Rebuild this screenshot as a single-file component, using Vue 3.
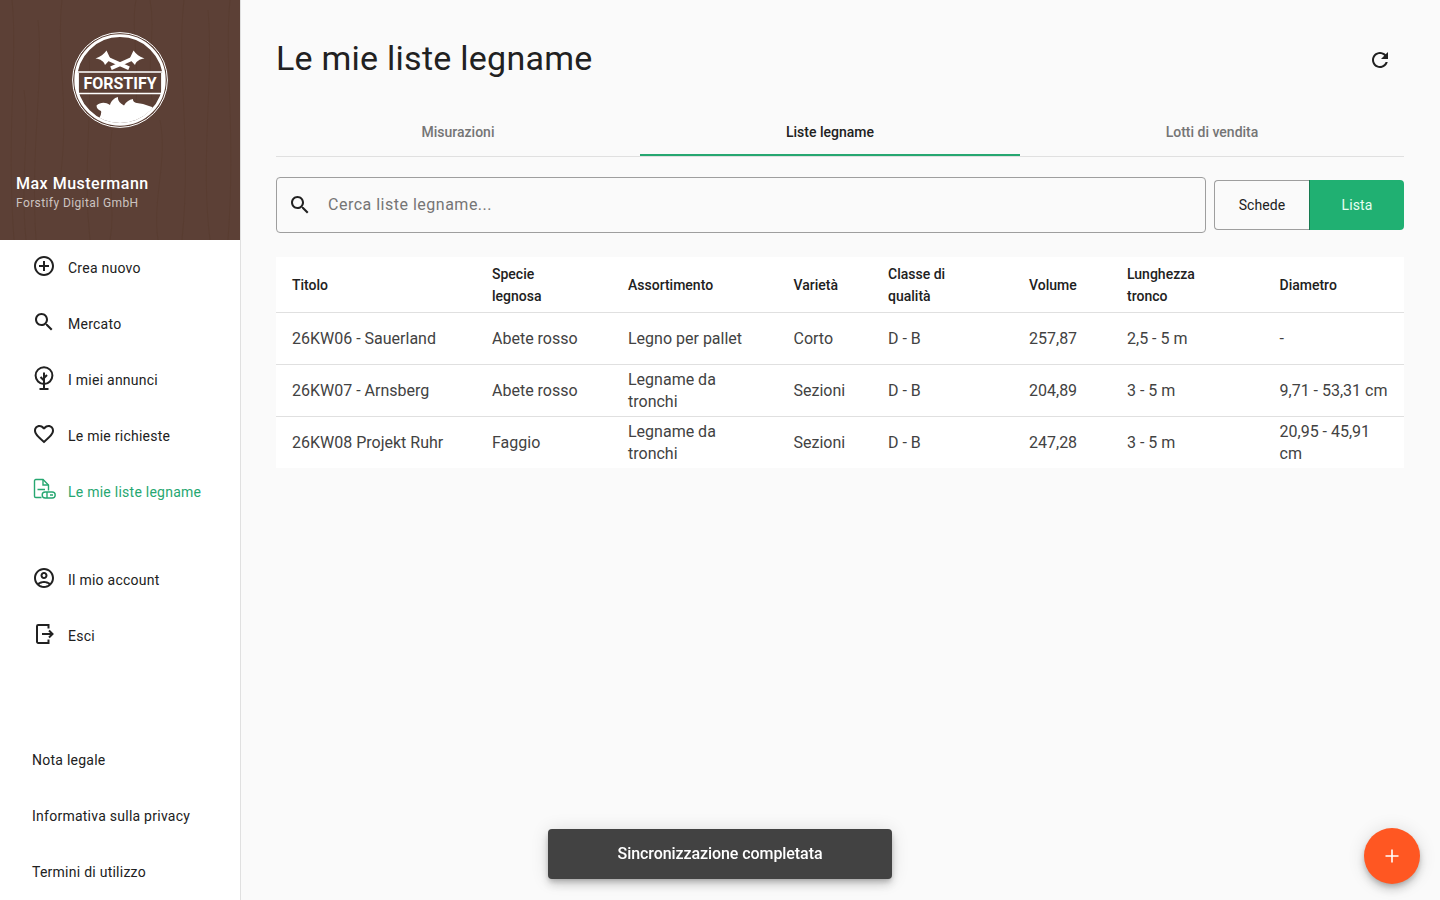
<script setup>
const mainNav = [
  { label: 'Crea nuovo', icon: 'add' },
  { label: 'Mercato', icon: 'search' },
  { label: 'I miei annunci', icon: 'tree' },
  { label: 'Le mie richieste', icon: 'heart' },
  { label: 'Le mie liste legname', icon: 'list', active: true }
]
const accountNav = [
  { label: 'Il mio account', icon: 'account' },
  { label: 'Esci', icon: 'exit' }
]
const legal = ['Nota legale', 'Informativa sulla privacy', 'Termini di utilizzo']
const tabs = [
  { label: 'Misurazioni', cls: 'tab-a' },
  { label: 'Liste legname', cls: 'tab-b', active: true },
  { label: 'Lotti di vendita', cls: 'tab-c' }
]
const headers = ['Titolo', 'Specie legnosa', 'Assortimento', 'Varietà', 'Classe di qualità', 'Volume', 'Lunghezza tronco', 'Diametro']
const rows = [
  ['26KW06 - Sauerland', 'Abete rosso', 'Legno per pallet', 'Corto', 'D - B', '257,87', '2,5 - 5 m', '-'],
  ['26KW07 - Arnsberg', 'Abete rosso', 'Legname da tronchi', 'Sezioni', 'D - B', '204,89', '3 - 5 m', '9,71 - 53,31 cm'],
  ['26KW08 Projekt Ruhr', 'Faggio', 'Legname da tronchi', 'Sezioni', 'D - B', '247,28', '3 - 5 m', '20,95 - 45,91 cm']
]
const grain = [
  'M12 0C18 60 6 130 14 240', 'M38 20C44 80 30 150 36 240', 'M62 0C56 50 70 110 60 180',
  'M88 40C94 100 82 170 90 240', 'M112 130C106 170 116 210 110 240', 'M136 0C130 30 142 70 134 120',
  'M160 120C168 160 152 200 158 240', 'M184 0C176 70 192 140 182 240', 'M208 10C214 80 200 160 210 240',
  'M230 0C224 60 236 130 228 240', 'M24 90C30 130 20 180 26 240', 'M150 0C156 30 146 70 152 100'
]
</script>

<template>
  <div class="app">
    <aside class="sidebar">
      <header class="profile">
        <svg class="grain" viewBox="0 0 240 240" aria-hidden="true">
          <path v-for="d in grain" :key="d" :d="d" />
        </svg>
        <svg class="logo" viewBox="0 0 96 96" aria-label="Forstify">
          <defs>
            <clipPath id="inner-disc"><circle cx="48" cy="48" r="43" /></clipPath>
          </defs>
          <circle cx="48" cy="48" r="47.4" fill="none" stroke="#fff" stroke-width="1" />
          <circle cx="48" cy="48" r="44.3" fill="none" stroke="#fff" stroke-width="2.8" />
          <g fill="#fff">
            <path d="M23.5 26.5C28.5 25 32 22 34.5 18.5L38.5 27L33 33C32 29.5 28.5 27 23.5 26.5Z" />
            <path d="M72.5 26.5C67.5 25 64 22 61.5 18.5L57.5 27L63 33C64 29.5 67.5 27 72.5 26.5Z" />
          </g>
          <g stroke="#fff" stroke-width="3.8" stroke-linecap="butt">
            <path d="M33 25.5L57 36.2" />
            <path d="M63 25.5L39 36.2" />
          </g>
          <path d="M5 40H91M5 61.5H91" stroke="#fff" stroke-width="1.5" />
          <path d="M5.5 41V61M90.5 41V61" stroke="#fff" stroke-width="2.8" />
          <text class="logo-text" x="48" y="57" text-anchor="middle">FORSTIFY</text>
          <path clip-path="url(#inner-disc)" fill="#fff"
            d="M22 92C27 87 30 83 29 79C26 78 24.5 76 24.5 73.5C28 70.5 33 69.5 38 73C39 69 42 66 46 65C45.5 68 47.5 71 52 73.5C54 70 57 67.5 61 67C60.5 69.5 63 71.5 68 71.5C72 72 76 74 80 75C80.5 76 83 78 86 79L85 82L78 96L20 96Z" />
        </svg>
        <div class="who">
          <div class="name">Max Mustermann</div>
          <div class="company">Forstify Digital GmbH</div>
        </div>
      </header>

      <nav class="nav">
        <a v-for="item in mainNav" :key="item.label" class="nav-item" :class="{ active: item.active }">
          <svg class="nav-icon" viewBox="0 0 24 24">
            <path v-if="item.icon === 'add'" class="solid" d="M13 7h-2v4H7v2h4v4h2v-4h4v-2h-4V7zm-1-5C6.48 2 2 6.48 2 12s4.48 10 10 10 10-4.48 10-10S17.52 2 12 2zm0 18c-4.41 0-8-3.59-8-8s3.59-8 8-8 8 3.59 8 8-3.59 8-8 8z" />
            <path v-else-if="item.icon === 'search'" class="solid" d="M15.5 14h-.79l-.28-.27C15.41 12.59 16 11.11 16 9.5 16 5.91 13.09 3 9.5 3S3 5.91 3 9.5 5.91 16 9.5 16c1.61 0 3.09-.59 4.23-1.57l.27.28v.79l5 4.99L20.49 19l-4.99-5zm-6 0C7.01 14 5 11.99 5 9.5S7.01 5 9.5 5 14 7.01 14 9.5 11.99 14 9.5 14z" />
            <g v-else-if="item.icon === 'tree'" class="line">
              <circle cx="12" cy="9.6" r="8.4" />
              <path d="M12 22.5V6.5M12 14.5L8.5 11M12 12L15 9M7.5 23H16.5" />
            </g>
            <path v-else-if="item.icon === 'heart'" class="solid" d="M16.5 3c-1.74 0-3.41.81-4.5 2.09C10.91 3.81 9.24 3 7.5 3 4.42 3 2 5.42 2 8.5c0 3.78 3.4 6.86 8.55 11.54L12 21.35l1.45-1.32C18.6 15.36 22 12.28 22 8.5 22 5.42 19.58 3 16.5 3zm-4.4 15.55l-.1.1-.1-.1C7.14 14.24 4 11.39 4 8.5 4 6.5 5.5 5 7.5 5c1.54 0 3.04.99 3.57 2.36h1.87C13.46 5.99 14.96 5 16.5 5c2 0 3.5 1.5 3.5 3.5 0 2.89-3.14 5.74-7.9 10.05z" />
            <g v-else class="line thin">
              <path d="M9.5 19.5H3.8A1.3 1.3 0 0 1 2.5 18.2V2.8A1.3 1.3 0 0 1 3.8 1.5H11L16.5 7V12.5" />
              <path d="M11 1.5V7H16.5M5.5 11.5H13" />
              <rect x="10.2" y="14" width="13" height="6" rx="3" />
              <path d="M15 14V20M18 17H21" />
            </g>
          </svg>
          <span>{{ item.label }}</span>
        </a>
      </nav>

      <nav class="nav account">
        <a v-for="item in accountNav" :key="item.label" class="nav-item">
          <svg class="nav-icon" viewBox="0 0 24 24">
            <path v-if="item.icon === 'account'" class="solid" d="M12 2C6.48 2 2 6.48 2 12s4.48 10 10 10 10-4.48 10-10S17.52 2 12 2zM7.35 18.5C8.66 17.56 10.26 17 12 17s3.34.56 4.65 1.5c-1.31.94-2.91 1.5-4.65 1.5s-3.34-.56-4.65-1.5zm10.79-1.38C16.45 15.8 14.32 15 12 15s-4.45.8-6.14 2.12C4.7 15.73 4 13.95 4 12c0-4.42 3.58-8 8-8s8 3.58 8 8c0 1.95-.7 3.73-1.86 5.12zM12 6c-1.93 0-3.5 1.57-3.5 3.5S10.07 13 12 13s3.5-1.57 3.5-3.5S13.93 6 12 6zm0 5c-.83 0-1.5-.67-1.5-1.5S11.17 8 12 8s1.5.67 1.5 1.5S12.83 11 12 11z" />
            <g v-else class="line">
              <path d="M16.5 6.5V3H6.2A1.2 1.2 0 0 0 5 4.2V19.8A1.2 1.2 0 0 0 6.2 21H16.5V17.5" />
              <path d="M10 12H20.5M17 8.5L20.5 12L17 15.5" />
            </g>
          </svg>
          <span>{{ item.label }}</span>
        </a>
      </nav>

      <nav class="legal">
        <a v-for="item in legal" :key="item" class="legal-item">{{ item }}</a>
      </nav>
    </aside>

    <main class="main">
      <div class="title-row">
        <h1>Le mie liste legname</h1>
        <svg class="refresh" viewBox="0 0 24 24"><path d="M17.65 6.35C16.2 4.9 14.21 4 12 4c-4.42 0-7.99 3.58-7.99 8s3.57 8 7.99 8c3.73 0 6.84-2.55 7.73-6h-2.08c-.82 2.33-3.04 4-5.65 4-3.31 0-6-2.69-6-6s2.69-6 6-6c1.66 0 3.14.69 4.22 1.78L13 11h7V4l-2.35 2.35z" /></svg>
      </div>

      <div class="tabs">
        <div v-for="tab in tabs" :key="tab.label" class="tab" :class="[tab.cls, { active: tab.active }]">{{ tab.label }}</div>
      </div>

      <div class="tools">
        <label class="search">
          <svg viewBox="0 0 24 24"><path d="M15.5 14h-.79l-.28-.27C15.41 12.59 16 11.11 16 9.5 16 5.91 13.09 3 9.5 3S3 5.91 3 9.5 5.91 16 9.5 16c1.61 0 3.09-.59 4.23-1.57l.27.28v.79l5 4.99L20.49 19l-4.99-5zm-6 0C7.01 14 5 11.99 5 9.5S7.01 5 9.5 5 14 7.01 14 9.5 11.99 14 9.5 14z" /></svg>
          <input type="text" placeholder="Cerca liste legname..." />
        </label>
        <div class="toggle">
          <button class="opt" type="button">Schede</button>
          <button class="opt on" type="button">Lista</button>
        </div>
      </div>

      <table class="table">
        <colgroup>
          <col class="c1" /><col class="c2" /><col class="c3" /><col class="c4" />
          <col class="c5" /><col class="c6" /><col class="c7" /><col class="c8" />
        </colgroup>
        <thead>
          <tr><th v-for="h in headers" :key="h">{{ h }}</th></tr>
        </thead>
        <tbody>
          <tr v-for="row in rows" :key="row[0]">
            <td v-for="(cell, i) in row" :key="i">{{ cell }}</td>
          </tr>
        </tbody>
      </table>
    </main>

    <div class="snack">Sincronizzazione completata</div>
    <button class="fab" type="button" aria-label="Aggiungi">
      <svg viewBox="0 0 24 24"><path d="M12 5.5V18.5M5.5 12H18.5" /></svg>
    </button>
  </div>
</template>

<style scoped>
.app {
  display: flex;
  height: 900px;
  overflow: hidden;
  background: #fafafa;
  font-family: Roboto, "Liberation Sans", sans-serif;
  color: #212121;
}
.sidebar {
  width: 240px;
  flex: none;
  display: flex;
  flex-direction: column;
  background: #fff;
  border-right: 1px solid #e0e0e0;
}
.profile {
  position: relative;
  height: 240px;
  flex: none;
  background: #5c4036;
  overflow: hidden;
  display: flex;
  flex-direction: column;
  align-items: center;
}
.grain {
  position: absolute;
  inset: 0;
  width: 240px;
  height: 240px;
}
.grain path {
  fill: none;
  stroke: #523629;
  stroke-width: 1;
  opacity: 0.35;
}
.logo {
  position: relative;
  width: 96px;
  height: 96px;
  margin-top: 32px;
}
.logo-text {
  font-family: Roboto, "Liberation Sans", sans-serif;
  font-size: 16px;
  font-weight: 700;
  fill: #fff;
}
.who {
  position: relative;
  align-self: stretch;
  padding: 46px 16px 0;
}
.name {
  font-size: 16px;
  line-height: 19px;
  font-weight: 500;
  letter-spacing: 0.5px;
  color: #fff;
}
.company {
  margin-top: 2px;
  font-size: 12px;
  line-height: 16px;
  letter-spacing: 0.4px;
  color: rgba(255, 255, 255, 0.7);
}
.nav {
  display: flex;
  flex-direction: column;
}
.account {
  margin-top: 32px;
}
.nav-item {
  height: 56px;
  display: flex;
  align-items: center;
  gap: 12px;
  padding-left: 32px;
  font-size: 14px;
  letter-spacing: 0.25px;
  color: #212121;
}
.nav-icon {
  width: 24px;
  height: 24px;
  flex: none;
  margin-bottom: 4px;
}
.solid {
  fill: #212121;
}
.line {
  fill: none;
  stroke: #212121;
  stroke-width: 2;
}
.line.thin {
  stroke: #26a771;
  stroke-width: 1.4;
}
.nav-item.active {
  color: #26a771;
}
.legal {
  margin-top: auto;
  display: flex;
  flex-direction: column;
}
.legal-item {
  height: 56px;
  display: flex;
  align-items: center;
  padding-left: 32px;
  font-size: 14px;
  letter-spacing: 0.25px;
  color: #212121;
}
.main {
  flex: 1;
  min-width: 0;
  padding: 0 36px 0 35px;
}
.title-row {
  display: flex;
  align-items: center;
  justify-content: space-between;
  height: 40px;
  margin-top: 38px;
}
h1 {
  margin: 0;
  font-size: 34px;
  line-height: 40px;
  font-weight: 400;
  letter-spacing: 0.25px;
  color: #212121;
}
.refresh {
  width: 24px;
  height: 24px;
  margin-right: 12px;
  margin-top: 4px;
  fill: #212121;
}
.tabs {
  display: flex;
  margin-top: 30px;
  border-bottom: 1px solid #e0e0e0;
}
.tab {
  height: 48px;
  display: flex;
  align-items: center;
  justify-content: center;
  font-size: 14px;
  font-weight: 500;
  color: #757575;
}
.tab-a { width: 364px; }
.tab-b { width: 380px; }
.tab-c { width: 384px; }
.tab.active {
  color: #212121;
  box-shadow: inset 0 -2px 0 #26a771;
}
.tools {
  display: flex;
  align-items: center;
  gap: 8px;
  margin-top: 20px;
}
.search {
  flex: 1;
  height: 56px;
  box-sizing: border-box;
  display: flex;
  align-items: center;
  gap: 16px;
  padding: 0 12px 0 11px;
  border: 1px solid #9e9e9e;
  border-radius: 4px;
}
.search svg {
  width: 24px;
  height: 24px;
  flex: none;
  fill: #212121;
}
.search input {
  flex: 1;
  min-width: 0;
  border: 0;
  outline: 0;
  background: transparent;
  padding: 0 0 2px;
  font: 400 16px Roboto, "Liberation Sans", sans-serif;
  letter-spacing: 0.5px;
  color: #212121;
}
.search input::placeholder {
  color: #757575;
  opacity: 1;
}
.toggle {
  display: flex;
  width: 190px;
  height: 50px;
  flex: none;
}
.opt {
  width: 95px;
  box-sizing: border-box;
  padding: 0;
  background: #fafafa;
  border: 1px solid #9e9e9e;
  border-right: 0;
  border-radius: 4px 0 0 4px;
  font: 400 14px Roboto, "Liberation Sans", sans-serif;
  letter-spacing: 0.1px;
  color: #212121;
}
.opt.on {
  background: #20b072;
  border: 0;
  border-left: 1px solid #167a50;
  border-radius: 0 4px 4px 0;
  color: #e6fff2;
}
.table {
  width: 1128px;
  margin-top: 24px;
  table-layout: fixed;
  border-collapse: collapse;
  background: #fff;
}
.c1 { width: 200px; }
.c2 { width: 136px; }
.c3 { width: 165.5px; }
.c4 { width: 94.5px; }
.c5 { width: 141px; }
.c6 { width: 98px; }
.c7 { width: 152.5px; }
.c8 { width: 140.5px; }
th {
  height: 55px;
  padding: 2px 40px 0 16px;
  box-sizing: border-box;
  text-align: left;
  font-size: 14px;
  line-height: 22px;
  font-weight: 500;
  color: #212121;
  border-bottom: 1px solid #e0e0e0;
}
td {
  height: 52px;
  padding: 2px 16px 0;
  box-sizing: border-box;
  font-size: 16px;
  line-height: 22px;
  color: #424242;
  border-bottom: 1px solid #e0e0e0;
}
tbody tr:last-child td {
  border-bottom: 0;
}
.snack {
  position: fixed;
  left: 548px;
  top: 829px;
  width: 344px;
  height: 50px;
  box-sizing: border-box;
  padding-bottom: 2px;
  display: flex;
  align-items: center;
  justify-content: center;
  border-radius: 4px;
  background: #424242;
  color: #fff;
  font-size: 16px;
  font-weight: 500;
  letter-spacing: -0.07px;
  box-shadow: 0 3px 5px -1px rgba(0, 0, 0, 0.2), 0 6px 10px rgba(0, 0, 0, 0.14), 0 1px 18px rgba(0, 0, 0, 0.12);
}
.fab {
  position: fixed;
  left: 1364px;
  top: 828px;
  width: 56px;
  height: 56px;
  padding: 16px;
  border: 0;
  border-radius: 50%;
  background: #ff5722;
  box-shadow: 0 3px 5px -1px rgba(0, 0, 0, 0.2), 0 6px 10px rgba(0, 0, 0, 0.14), 0 1px 18px rgba(0, 0, 0, 0.12);
}
.fab svg {
  display: block;
  width: 24px;
  height: 24px;
  fill: none;
  stroke: #fff;
  stroke-width: 1.6;
}
</style>

<style>
html, body {
  margin: 0;
  overflow: hidden;
}
</style>
